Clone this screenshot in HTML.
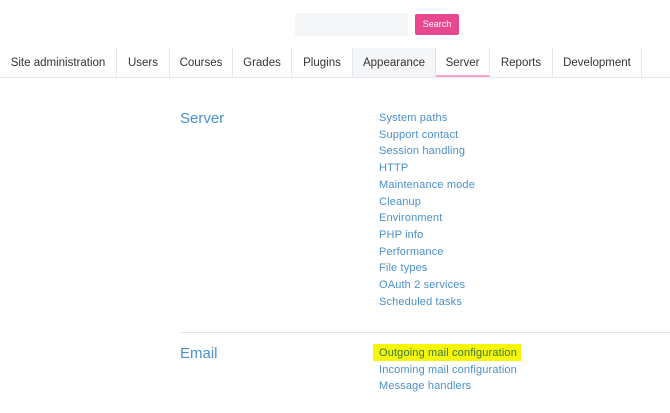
<!DOCTYPE html>
<html><head><style>
body{margin:0;width:670px;height:413px;background:#fff;font-family:"Liberation Sans",sans-serif;overflow:hidden;position:relative}
.search{position:absolute;left:295px;top:13px;width:113px;height:23px;background:#f5f6f8}
.btn{position:absolute;left:415px;top:14px;width:44px;height:21px;background:#e8488f;color:#fff;font-size:9px;line-height:21px;text-align:center;border-radius:2px}
.tabs{position:absolute;left:0;top:48px;height:29px;width:670px;border-bottom:1px solid #e3e6ea}
.tab{position:absolute;top:0;height:29px;line-height:30px;font-size:11.5px;color:#333;text-align:center;border-right:1px solid #e3e6ea;box-sizing:border-box}
.h{position:absolute;left:180px;font-size:15px;color:#4a90cc}
.l{position:absolute;left:379px;font-size:11px;color:#4a90cc;line-height:16.7px;letter-spacing:0.15px}
</style></head><body>
<div class="search"></div><div class="btn">Search</div>
<div class="tabs">
<div class="tab" style="left:0;width:117px">Site administration</div>
<div class="tab" style="left:117px;width:53px">Users</div>
<div class="tab" style="left:170px;width:63px">Courses</div>
<div class="tab" style="left:233px;width:59px">Grades</div>
<div class="tab" style="left:292px;width:61px">Plugins</div>
<div class="tab" style="left:353px;width:83px;background:#f5f6f8">Appearance</div>
<div class="tab" style="left:436px;width:54px;border-bottom:2px solid #f3a6c8">Server</div>
<div class="tab" style="left:490px;width:63px">Reports</div>
<div class="tab" style="left:553px;width:89px">Development</div>
</div>
<div class="h" style="top:110px">Server</div>
<div class="l" style="top:110px">System paths<br>Support contact<br>Session handling<br>HTTP<br>Maintenance mode<br>Cleanup<br>Environment<br>PHP info<br>Performance<br>File types<br>OAuth 2 services<br>Scheduled tasks</div>
<div style="position:absolute;left:180px;top:332px;width:490px;height:1px;background:#e3e6ea"></div>
<div class="h" style="top:345px">Email</div>
<div style="position:absolute;left:373px;top:344px;width:148px;height:17px;background:#f6f60a"></div>
<div class="l" style="top:345px"><span style="color:#3a7a3a">Outgoing mail configuration</span><br>Incoming mail configuration<br>Message handlers</div>
</body></html>
